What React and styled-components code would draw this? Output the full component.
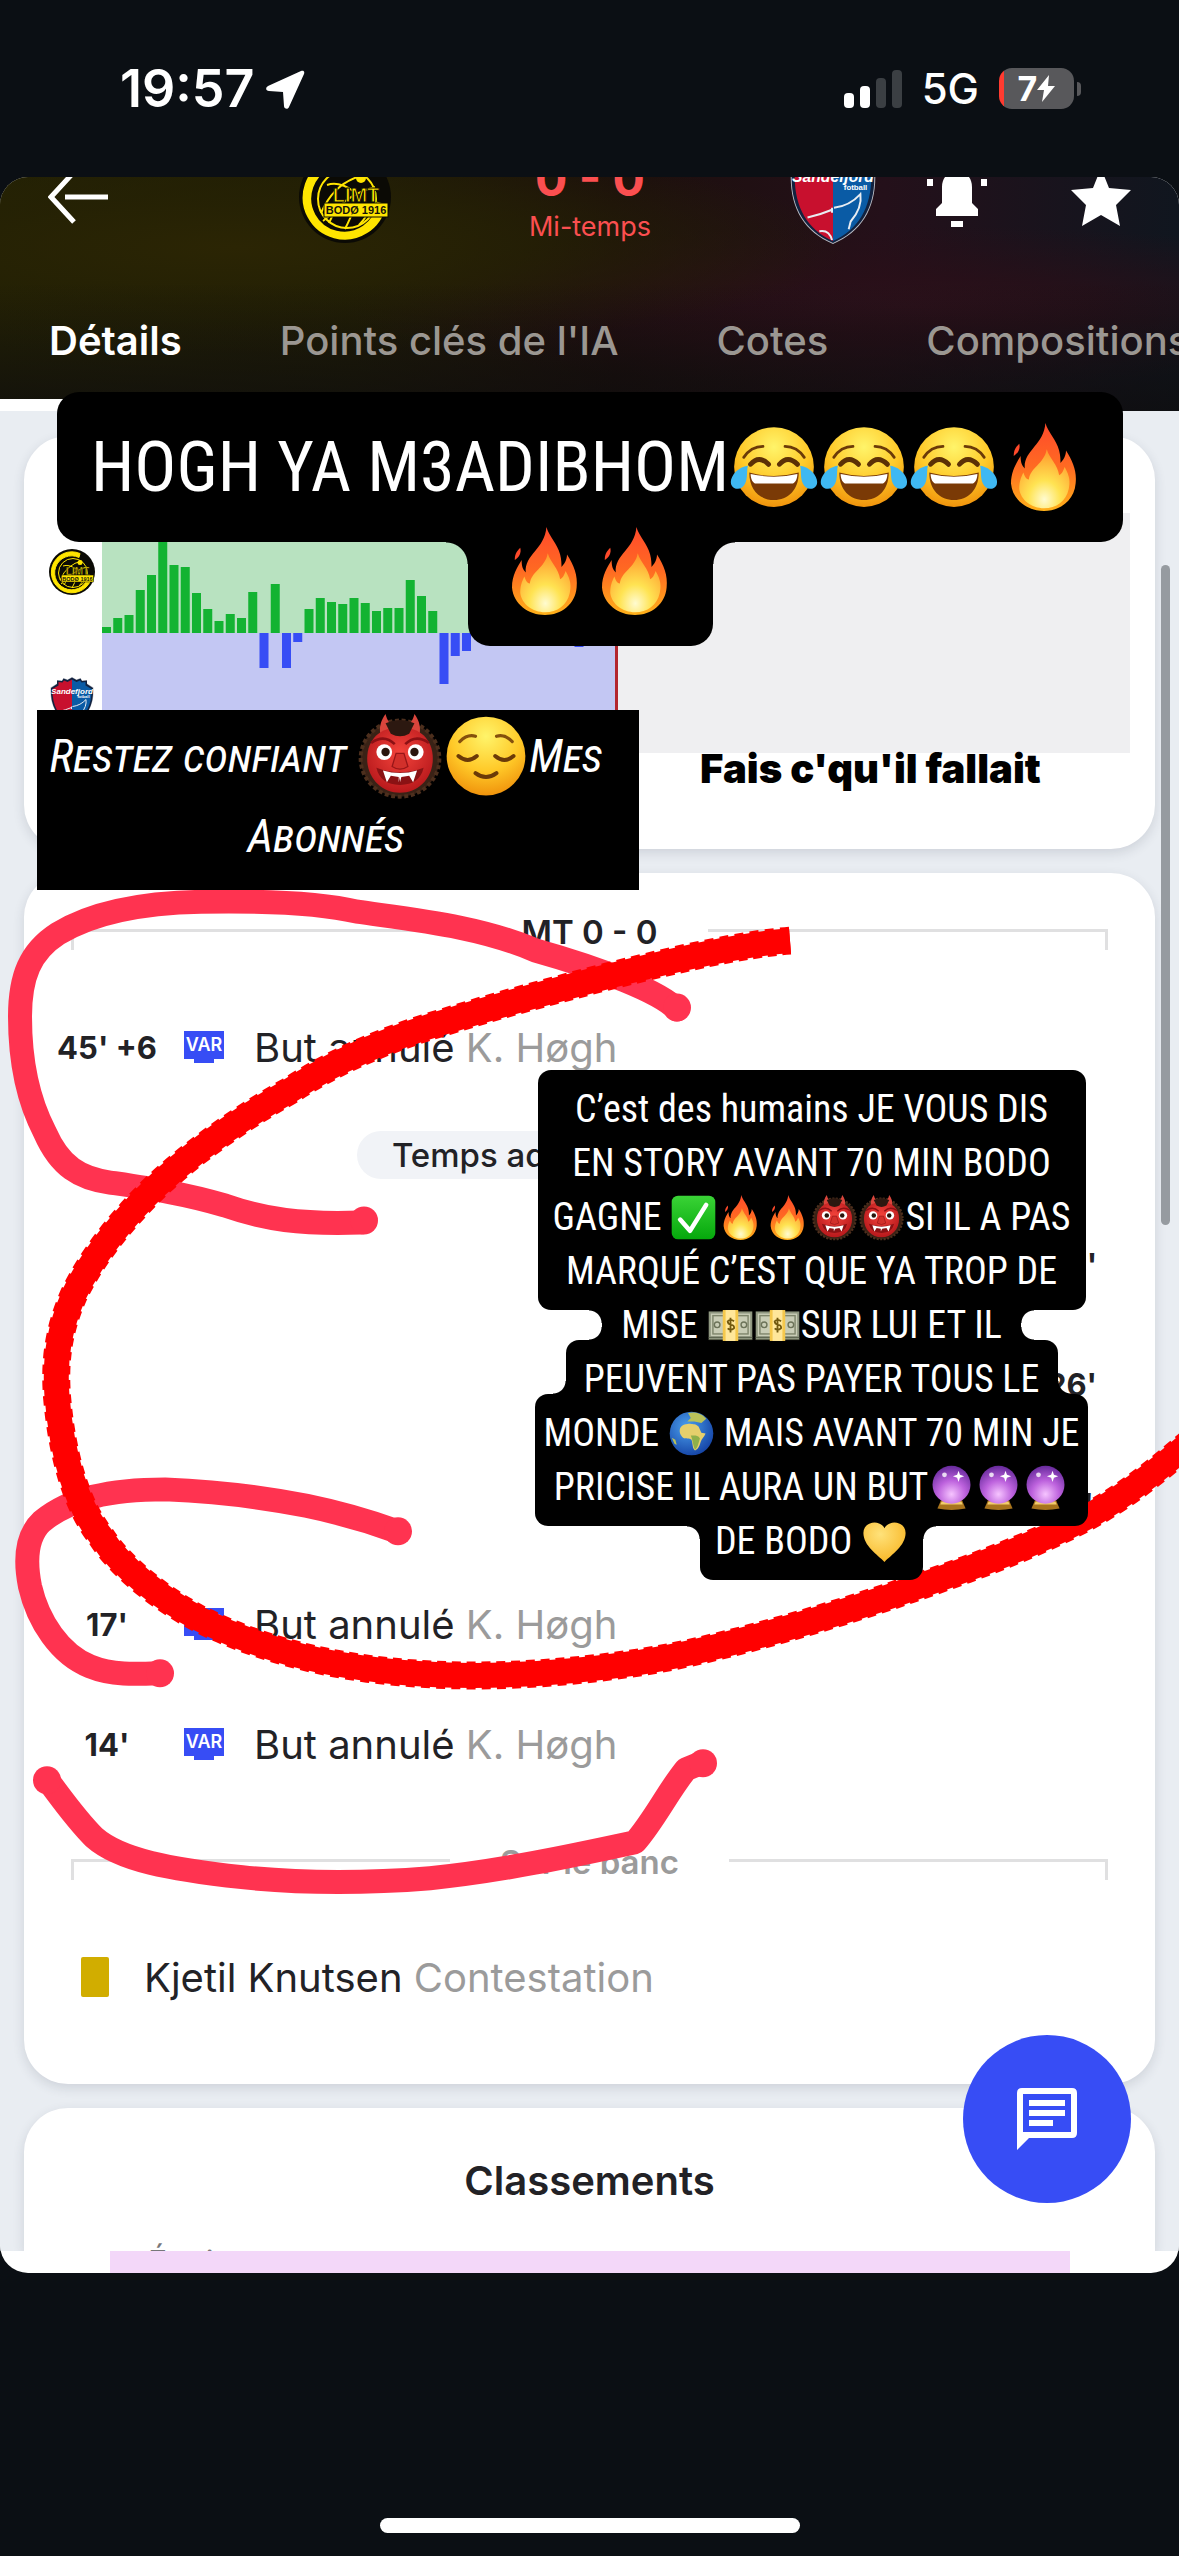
import React from 'react';
import styled, { createGlobalStyle, css } from 'styled-components';

const ui = "Inter, 'Liberation Sans', sans-serif";
const narrow = "'Liberation Sans Narrow', 'Roboto Condensed', 'Liberation Sans', sans-serif";

const GlobalStyle = createGlobalStyle`
  * { box-sizing: border-box; }
  body { margin: 0; background: #0b0f14; font-family: ${ui}; }
  button { border: 0; padding: 0; background: none; font: inherit; color: inherit; }
  svg { display: block; }
`;

/* ---------- shell ---------- */

const Screen = styled.div`
  min-height: 100vh;
  display: flex;
  flex-direction: column;
  background: #0b0f14;
  overflow: hidden;
`;

const StatusBar = styled.header`
  height: 177px;
  padding: 0 98px 0 120px;
  display: flex;
  align-items: center;
  justify-content: space-between;
  color: #fff;
`;

const StatusGroup = styled.div`
  display: flex;
  align-items: center;
  gap: ${(p) => p.$gap}px;
`;

const Clock = styled.time`
  font-size: 52px;
  font-weight: 600;
  line-height: 60px;
`;

const Network = styled.span`
  font-size: 42px;
  font-weight: 500;
  line-height: 60px;
`;

const Battery = styled.div`
  display: flex;
  align-items: center;
  gap: 3px;
  &::after {
    content: '';
    width: 4px;
    height: 14px;
    border-radius: 0 4px 4px 0;
    background: #58585b;
  }
`;

const BatteryBody = styled.div`
  width: 75px;
  height: 41px;
  border-radius: 13px;
  display: flex;
  align-items: center;
  justify-content: center;
  font-size: 34px;
  font-weight: 700;
  background: linear-gradient(to right, #ff3b30 5px, #58585b 5px);
`;

const Story = styled.main`
  position: relative;
  border-radius: 28px;
  overflow: hidden;
  background: #fff;
`;

const HomeArea = styled.footer`
  flex: 1;
  min-height: 60px;
  display: flex;
  align-items: flex-end;
  justify-content: center;
  padding-bottom: 23px;
`;

const HomeBar = styled.div`
  width: 420px;
  height: 15px;
  border-radius: 8px;
  background: #fff;
`;

/* ---------- match header ---------- */

const MatchHeader = styled.div`
  height: 234px;
  overflow: hidden;
  background:
    linear-gradient(to bottom, rgba(14, 13, 13, 0) 45%, rgba(14, 13, 14, 0.75) 100%),
    radial-gradient(ellipse at 20% 30%, #2b2504 0, rgba(38, 34, 4, 0.75) 22%, rgba(20, 17, 8, 0) 46%),
    radial-gradient(ellipse at 77% 55%, #2c111b 0, rgba(42, 15, 24, 0.7) 16%, rgba(20, 14, 20, 0) 44%),
    linear-gradient(to right, #232104 0, #1f1c06 30%, #1c0f0c 52%, #24101a 75%, #10161f 100%);
`;

const MatchRow = styled.div`
  height: 144px;
  margin-top: -52px;
  padding: 0 48px;
  display: flex;
  align-items: center;
  color: #fff;
`;

const Teams = styled.div`
  width: 578px;
  margin: 0 50px 0 auto;
  display: flex;
  align-items: center;
  justify-content: space-between;
`;

const Actions = styled.div`
  width: 204px;
  display: flex;
  align-items: center;
  justify-content: space-between;
`;

const ScoreBlock = styled.div`
  display: flex;
  flex-direction: column;
  align-items: center;
  color: #fb4f50;
`;

const Score = styled.strong`
  font-size: 48px;
  font-weight: 700;
  line-height: 60px;
`;

const Period = styled.span`
  font-size: 27px;
  line-height: 36px;
`;

const Tabs = styled.nav`
  height: 142px;
  display: flex;
`;

const Tab = styled.button`
  flex: none;
  padding: 0 49px;
  font-size: 40px;
  font-weight: ${(p) => (p.$active ? 600 : 500)};
  color: ${(p) => (p.$active ? '#fff' : '#9b9792')};
  box-shadow: ${(p) => (p.$active ? 'inset 0 -12px 0 #fff' : 'none')};
`;

/* ---------- cards ---------- */

const Feed = styled.div`
  display: flex;
  flex-direction: column;
  gap: 24px;
  padding: 25px 24px 0 24px;
  overflow: hidden;
  background: #e9edf2;
`;

const Card = styled.section`
  padding: ${(p) => p.$pad};
  border-radius: ${(p) => (p.$open ? '44px 44px 0 0' : '44px')};
  background: #fff;
  box-shadow: 0 4px 12px rgba(40, 50, 70, 0.14);
`;

const Momentum = styled.div`
  display: flex;
  height: 240px;
`;

const Crests = styled.div`
  width: 52px;
  margin-right: 4px;
  margin-left: 22px;
  padding: 36px 0 24px;
  display: flex;
  flex-direction: column;
  align-items: center;
  justify-content: space-between;
`;

const Chart = styled.svg`
  flex: 1;
  min-width: 0;
  height: 240px;
`;

const Divider = styled.div`
  display: flex;
  align-items: center;
  gap: 50px;
  height: 36px;
  margin: ${(p) => p.$top}px 47px 37px;
  font-size: 33px;
  font-weight: 600;
  line-height: 36px;
  white-space: nowrap;
  color: ${(p) => (p.$muted ? '#9b9b9b' : '#222226')};
  &::before,
  &::after {
    content: '';
    flex: 1;
    height: 18px;
    align-self: flex-end;
    border-top: 3px solid #e0e0e1;
  }
  &::before { border-left: 3px solid #e0e0e1; }
  &::after { border-right: 3px solid #e0e0e1; }
`;

const Event = styled.div`
  height: 120px;
  padding: 0 36px;
  display: flex;
  align-items: center;
  gap: 30px;
  flex-direction: ${(p) => (p.$away ? 'row-reverse' : 'row')};
  font-size: 40px;
  white-space: nowrap;
  color: #222226;
`;

const Minute = styled.time`
  flex: none;
  width: 94px;
  display: flex;
  justify-content: center;
  font-size: 31px;
  font-weight: 700;
`;

const Muted = styled.span`
  color: #9b9b9b;
`;

const YellowCard = styled.span`
  width: 28px;
  height: 40px;
  margin: 0 5px 0 21px;
  border-radius: 2px;
  background: #d1ad00;
`;

const Extra = styled.div`
  width: fit-content;
  height: 48px;
  margin: 24px auto 25px;
  padding: 0 35px;
  border-radius: 24px;
  background: #f1f3f7;
  font-size: 33px;
  font-weight: 500;
  line-height: 48px;
  color: #222226;
`;

const Title = styled.h2`
  margin: 0;
  font-size: 40px;
  font-weight: 600;
  line-height: 48px;
  text-align: center;
  color: #222226;
`;

const TableHead = styled.div`
  height: 46px;
  padding: 38px 124px 0;
  overflow: hidden;
  font-size: 32px;
  line-height: 40px;
  color: #77777a;
`;

const TableStrip = styled.div`
  height: 22px;
  margin: 0 109px 0 110px;
  background: #f3d7f9;
`;

const Fab = styled.button`
  position: absolute;
  right: 48px;
  bottom: 70px;
  width: 168px;
  height: 168px;
  border-radius: 50%;
  background: #374df5;
  display: grid;
  place-items: center;
`;

const ScrollThumb = styled.div`
  position: absolute;
  right: 9px;
  top: 388px;
  width: 9px;
  height: 660px;
  border-radius: 5px;
  background: #969ba0;
`;

/* ---------- story overlays ---------- */

const Ink = styled.svg`
  position: absolute;
  inset: 0;
  width: 100%;
  height: 100%;
  pointer-events: none;
`;

const Sticker = styled.div`
  position: absolute;
  left: ${(p) => p.$x}px;
  top: ${(p) => p.$y}px;
  width: ${(p) => p.$w}px;
  display: flex;
  flex-direction: column;
  align-items: center;
  font-family: ${narrow};
  font-size: ${(p) => p.$size}px;
  color: #fff;
  --line: ${(p) => p.$line}px;
  --pad: ${(p) => p.$pad}px;
  --r: ${(p) => p.$r}px;
`;

const hollow = (side) => css`
  content: '';
  position: absolute;
  ${side === 'left' ? 'right' : 'left'}: 100%;
  top: calc(var(--pad) * 2);
  bottom: calc(var(--pad) * 2);
  width: var(--r);
  background-repeat: no-repeat;
  background-size: var(--r) var(--r);
  background-position: 0 0, 0 100%;
  background-image:
    radial-gradient(circle at ${side === 'left' ? '0' : '100%'} 100%, transparent calc(var(--r) - 1px), ${(p) => (p.$under ? '#000' : 'transparent')} var(--r)),
    radial-gradient(circle at ${side === 'left' ? '0' : '100%'} 0, transparent calc(var(--r) - 1px), ${(p) => (p.$over ? '#000' : 'transparent')} var(--r));
`;

const Block = styled.div`
  position: relative;
  width: ${(p) => p.$w}px;
  padding: var(--pad) 0;
  border-radius: var(--r);
  background: #000;
  & + & { margin-top: calc(var(--pad) * -2); }
  &::before { ${hollow('left')} }
  &::after { ${hollow('right')} }
`;

const Line = styled.div`
  position: relative;
  z-index: 1;
  height: var(--line);
  display: flex;
  align-items: center;
  justify-content: center;
  white-space: pre;
  line-height: var(--line);
`;

const Plate = styled.div`
  position: absolute;
  left: 37px;
  top: 533px;
  width: 602px;
  height: 180px;
  padding: 6px 24px 0 0;
  background: #000;
  color: #fff;
  font-family: ${narrow};
  font-style: italic;
  font-variant: small-caps;
  font-size: 46px;
  --line: 80px;
`;

const Caption = styled.p`
  position: absolute;
  left: 700px;
  top: 568px;
  margin: 0;
  font-size: 40px;
  font-weight: 900;
  line-height: 48px;
  white-space: nowrap;
  color: #000;
`;

/* ---------- emoji ---------- */

const EmojiDefs = () => (
  <svg width="0" height="0" style={{ position: 'absolute' }} aria-hidden="true">
    <defs>
      <radialGradient id="face" cx=".5" cy=".25" r=".8">
        <stop offset="0" stopColor="#fff46a" />
        <stop offset=".55" stopColor="#ffc928" />
        <stop offset="1" stopColor="#ee8b08" />
      </radialGradient>
      <linearGradient id="flame" x1="0" y1="0" x2="0" y2="1">
        <stop offset="0" stopColor="#ff4a2b" />
        <stop offset=".5" stopColor="#ff6a22" />
        <stop offset="1" stopColor="#ffb11a" />
      </linearGradient>
      <radialGradient id="core" cx=".5" cy=".85" r=".8">
        <stop offset="0" stopColor="#fffbd0" />
        <stop offset=".4" stopColor="#ffe352" />
        <stop offset="1" stopColor="#ff9c2e" />
      </radialGradient>
      <radialGradient id="mask" cx=".5" cy=".4" r=".6">
        <stop offset="0" stopColor="#f4443c" />
        <stop offset="1" stopColor="#b8191c" />
      </radialGradient>
      <linearGradient id="green" x1="0" y1="0" x2="0" y2="1">
        <stop offset="0" stopColor="#3ad336" />
        <stop offset="1" stopColor="#05a80c" />
      </linearGradient>
      <radialGradient id="sea" cx=".4" cy=".35" r=".7">
        <stop offset="0" stopColor="#4ba0ee" />
        <stop offset="1" stopColor="#1442a4" />
      </radialGradient>
      <radialGradient id="orb" cx=".5" cy=".75" r=".8">
        <stop offset="0" stopColor="#f6c4ff" />
        <stop offset=".45" stopColor="#bd62dd" />
        <stop offset="1" stopColor="#5b2293" />
      </radialGradient>
      <radialGradient id="gold" cx=".4" cy=".3" r=".8">
        <stop offset="0" stopColor="#ffe27a" />
        <stop offset="1" stopColor="#f8b31f" />
      </radialGradient>
    </defs>
  </svg>
);

const art = {
  joy: (
    <>
      <circle cx="32" cy="32" r="29" fill="url(#face)" />
      <path d="M10 25c4-6 9-8 14-8M54 25c-4-6-9-8-14-8" fill="none" stroke="#6b3a08" strokeWidth="2" strokeLinecap="round" />
      <path d="M15 30q6-7 13 0M36 30q6-7 13 0" fill="none" stroke="#5c3006" strokeWidth="3.6" strokeLinecap="round" />
      <path d="M14 36q18 5 36 0c0 13-8 20-18 20s-18-7-18-20z" fill="#7a3a06" />
      <path d="M15 37q17 4 34 0c0 4-2 7-4 7H19c-2 0-4-3-4-7z" fill="#fff" />
      <path d="M13 31c-8 1-14 9-12 14 2 4 8 4 10-1 2-4 1-9 2-13zM51 31c8 1 14 9 12 14-2 4-8 4-10-1-2-4-1-9-2-13z" fill="#3fb8f2" />
    </>
  ),
  fire: (
    <>
      <path d="M33 0c2 7 8 12 10 20 1 4 1 7 1 9 2-2 4-5 4-9 5 8 8 15 7 24-1 12-11 20-23 20S9 56 8 44c0-9 4-15 7-20 0 5 1 7 3 9C17 20 32 16 33 0z" fill="url(#flame)" />
      <path d="M14 15c-3 3-4 5-4 9 3-2 5-5 4-9z" fill="#ff4a2b" />
      <path d="M34 19c2 7 8 11 9 19 2-1 3-3 4-6 4 7 4 11 3 16-2 9-9 14-18 14s-17-6-18-14c0-5 1-8 3-12 1 3 2 5 4 5 1-9 11-11 13-22z" fill="url(#core)" />
    </>
  ),
  ogre: (
    <>
      <ellipse cx="32" cy="34" rx="30" ry="29" fill="#3a2216" stroke="#4d2f1d" strokeWidth="3" strokeDasharray="3 2" />
      <path d="M17 15C16 9 18 4 21 0c1 5 4 8 7 11zM47 15c1-6-1-11-4-15-1 5-4 8-7 11z" fill="#d9453c" />
      <path d="M32 10c15 0 25 9 25 24S46 60 32 60 7 49 7 34s10-24 25-24z" fill="url(#mask)" />
      <path d="M21 7q11-5 22 0l-4 8q-7 4-14 0z" fill="#2c1810" />
      <path d="M10 22q10-7 18 1M54 22q-10-7-18 1" fill="none" stroke="#8c1014" strokeWidth="2" />
      <circle cx="20" cy="29" r="6" fill="#fff" />
      <circle cx="44" cy="29" r="6" fill="#fff" />
      <circle cx="21" cy="29" r="3.2" fill="#2a150c" />
      <circle cx="43" cy="29" r="3.2" fill="#2a150c" />
      <path d="M29 30l-3 10q6 4 12 0l-3-10z" fill="#d2302b" stroke="#981618" strokeWidth="1" />
      <path d="M14 41q18 7 36 0-3 13-18 13T14 41z" fill="#8a1214" />
      <path d="M19 43l3 9 3-5 6 1v4l1-4v4l1-4 6-1 3 5 3-9q-13 4-26 0z" fill="#fff" />
    </>
  ),
  relieved: (
    <>
      <circle cx="32" cy="32" r="30" fill="url(#face)" />
      <path d="M12 21q6-6 12-4M52 21q-6-6-12-4" fill="none" stroke="#85500c" strokeWidth="2.4" strokeLinecap="round" />
      <path d="M11 32q7 6 14 0M39 32q7 6 14 0M24 45q8 6 16 0" fill="none" stroke="#6b3a08" strokeWidth="3" strokeLinecap="round" />
    </>
  ),
  check: (
    <>
      <rect x="1" y="1" width="62" height="62" rx="9" fill="url(#green)" />
      <path d="M13 35l14 16 23-37" fill="none" stroke="#fff" strokeWidth="6.5" strokeLinecap="round" strokeLinejoin="round" />
    </>
  ),
  money: (
    <>
      <rect x="1" y="12" width="62" height="40" fill="#8f9780" />
      <rect x="4" y="15" width="56" height="32" fill="#c9cdb6" />
      <rect x="7" y="18" width="50" height="26" fill="none" stroke="#7f866c" strokeWidth="2" />
      <circle cx="13" cy="31" r="4" fill="none" stroke="#6c7359" strokeWidth="2" />
      <circle cx="51" cy="31" r="4" fill="none" stroke="#6c7359" strokeWidth="2" />
      <path d="M1 52h62M1 49h62" stroke="#5f6650" strokeWidth="1.4" />
      <rect x="21" y="10" width="22" height="44" fill="#f5c84c" />
      <rect x="25" y="10" width="14" height="44" fill="#ffe79a" />
      <path d="M37 26q-5-4-9 0 0 4 5 5t4 5q-5 4-9 0M32 21v21" fill="none" stroke="#72590f" strokeWidth="2.6" />
    </>
  ),
  globe: (
    <>
      <circle cx="32" cy="32" r="31" fill="url(#sea)" />
      <path d="M16 24c3-5 9-6 14-6 4 1 8 0 12 4l4 9 6 1c-2 5-6 8-7 12s-3 10-8 12c-4-2-3-10-5-15-3-3-8-1-12-3-4-4-6-9-4-14z" fill="#e6cf6c" />
      <path d="M27 3c9-2 19 0 26 8l-7 6-10-2-10 0 5-5zM4 38l5 3 2 7-3-1z" fill="#b9c25a" />
      <path d="M31 35c5 0 10-1 13 4-2 6-3 13-7 16-3-5-3-14-6-20z" fill="#8fb04a" />
    </>
  ),
  orb: (
    <>
      <path d="M17 50h30l5 12q-20 4-40 0z" fill="#a8741d" />
      <path d="M18 52h28l2 4H16z" fill="#f1cd6c" />
      <circle cx="32" cy="28" r="27" fill="url(#orb)" />
      <path d="M42 8l2 6 6 2-6 2-2 6-2-6-6-2 6-2z" fill="#fff" />
      <circle cx="22" cy="14" r="3.4" fill="#fff" opacity=".8" />
    </>
  ),
  heart: <path d="M32 61C22 51 2 38 2 20 2 4 24-1 32 13 40-1 62 4 62 20c0 18-20 31-30 41z" fill="url(#gold)" />,
};

const labels = {
  joy: 'rire aux larmes', fire: 'feu', ogre: 'ogre', relieved: 'soulagé', check: 'coche',
  money: 'billets', globe: 'globe', orb: 'boule de cristal', heart: 'cœur jaune',
};

const EmojiSvg = styled.svg`
  flex: none;
  margin: 0 1px;
  overflow: visible;
`;

const Emoji = ({ name, size }) => (
  <EmojiSvg role="img" aria-label={labels[name]} width={size} height={size} viewBox="0 0 64 64">
    {art[name]}
  </EmojiSvg>
);

const Rich = ({ parts, size }) => (
  <Line>
    {parts.map((part, i) =>
      art[part] ? <Emoji key={i} name={part} size={size} /> : <span key={i}>{part}</span>
    )}
  </Line>
);

/* ---------- crests and icons ---------- */

const BodoCrest = ({ size }) => (
  <svg width={size} height={size} viewBox="0 0 92 92" role="img" aria-label="Bodø/Glimt">
    <circle cx="46" cy="46" r="46" fill="#0b0a05" />
    <path d="M62 9A41 41 0 1 0 86 54L79 52A34 34 0 1 1 60 17z" fill="#ffe500" stroke="#ffe500" strokeWidth="2" />
    <circle cx="48" cy="48" r="29" fill="none" stroke="#ffe500" strokeWidth="2" />
    <path d="M22 62Q36 30 66 24M30 72Q40 46 76 36M46 78Q52 66 54 60M60 74Q68 66 70 58M28 34Q40 30 54 40M24 70Q30 66 34 60" fill="none" stroke="#ffe500" strokeWidth="2" />
    <circle cx="62" cy="27" r="5" fill="#ffe500" />
    <text x="57" y="51" textAnchor="middle" fontFamily="Liberation Sans" fontWeight="700" fontSize="20" fill="#ffe500" stroke="#0b0a05" strokeWidth="1">LIMT</text>
    <rect x="25" y="52" width="64" height="14" fill="#ffe500" stroke="#0b0a05" />
    <text x="57" y="63" textAnchor="middle" fontFamily="Liberation Sans" fontWeight="700" fontSize="11" fill="#16140a">BODØ 1916</text>
  </svg>
);

const SandefjordCrest = ({ width, height }) => (
  <svg width={width} height={height} viewBox="0 0 88 98" role="img" aria-label="Sandefjord Fotball">
    <path d="M1 22L14 14V7l10 1 3-5 8 3 9-5 9 5 8-3 3 5 10-1v7l13 8c2 36-12 62-43 75C13 84-1 58 1 22z" fill="#b9bcc4" />
    <path d="M2 23l12-8V8l10 1 3-5 8 3 9-5 9 5 8-3 3 5 10-1v7l12 8c2 35-12 60-42 73C14 83 0 58 2 23z" fill="#12223f" />
    <path d="M5 25l12-7v-7l8 1 3-4 7 3 9-5v88C17 82 4 58 5 25z" fill="#c8102e" />
    <path d="M83 25l-12-7v-7l-8 1-3-4-7 3-9-5v88c27-12 40-36 39-69z" fill="#0a5ba5" />
    <path d="M18 70q13-3 25-8M45 60q16-2 27-14 2 14-10 28l-2 8M30 84q10-2 13 9M43 60v5" fill="none" stroke="#e8ecf2" strokeWidth="2" />
    <text x="44" y="34" textAnchor="middle" fontFamily="Liberation Sans" fontStyle="italic" fontWeight="700" fontSize="16" fill="#fff">Sandefjord</text>
    <text x="67" y="42" textAnchor="middle" fontFamily="Liberation Sans" fontWeight="700" fontSize="8" fill="#fff">fotball</text>
  </svg>
);

const VarBadge = () => (
  <svg width="40" height="32" viewBox="0 0 40 32" role="img" aria-label="VAR">
    <path d="M0 0h40v28H30v4H10v-4H0z" fill="#374df5" />
    <text x="20" y="20" textAnchor="middle" fontFamily="Inter" fontWeight="600" fontSize="18" fill="#fff">VAR</text>
  </svg>
);

/* ---------- data ---------- */

const momentum = [
  6, 15, 18, 43, 58, 100, 68, 66, 40, 24, 12, 19, 15, 41, -35, 49, -35, -9, 24, 35, 31, 29, 35, 30, 22, 25, 25,
  53, 37, 22, -51, -23, -18, 0, 0, 0, 0, 0, 0, 0, 0, 0, -14,
];

const events = [
  { minute: "38'", away: true },
  { minute: "26'", away: true },
  { minute: "21'", away: true },
  { minute: "17'" },
  { minute: "14'" },
];

const Disallowed = ({ minute }) => (
  <Event>
    <Minute>{minute}</Minute>
    <VarBadge />
    <span>But annulé <Muted>K. Høgh</Muted></span>
  </Event>
);

const pinkStrokes = [
  'M677 833C660 815 600 792 536 774C480 750 420 744 357 735C320 726 260 724 201 725C150 726 95 734 58 757C30 775 20 800 20 840C20 880 26 920 45 956C60 990 80 1002 110 1006C150 1012 185 1017 225 1029C265 1043 300 1048 361 1046',
  'M397 1355C350 1338 280 1318 165 1313C110 1313 70 1322 42 1345C26 1360 25 1385 30 1410C38 1445 60 1478 90 1490C112 1499 135 1498 158 1497',
  'M47 1603C60 1620 75 1642 94 1661C120 1684 170 1693 242 1701C310 1708 380 1706 430 1702C500 1695 570 1680 635 1666C655 1643 668 1615 686 1593L703 1586',
];

const pinkTips = [[677, 831], [364, 1044], [398, 1355], [160, 1497], [47, 1604], [703, 1587]];

const redStroke =
  'M790 764C740 768 680 782 607 800C550 815 500 828 446 845C380 864 330 888 290 914C235 945 190 978 156 1010C115 1050 90 1085 74 1118C60 1150 54 1180 57 1220C62 1280 77 1330 101 1360C120 1390 160 1422 200 1443C260 1473 330 1490 400 1496C480 1503 560 1498 640 1486C700 1477 800 1450 890 1420C960 1396 1040 1368 1097 1335C1130 1316 1160 1292 1190 1266';

/* ---------- page ---------- */

export default function App() {
  return (
    <Screen>
      <GlobalStyle />
      <EmojiDefs />
      <StatusBar>
        <StatusGroup $gap={10}>
          <Clock>19:57</Clock>
          <svg width="40" height="40" viewBox="0 0 40 40" aria-hidden="true">
            <path d="M36 2L3 17c-3 2-2 5 1 5l14 1 1 14c0 3 4 4 5 1L39 5c1-3-1-4-3-3z" fill="#fff" />
          </svg>
        </StatusGroup>
        <StatusGroup $gap={20}>
          <svg width="58" height="38" viewBox="0 0 58 38" aria-hidden="true">
            <rect x="0" y="23" width="10" height="15" rx="4" fill="#fff" />
            <rect x="16" y="16" width="10" height="22" rx="4" fill="#fff" />
            <rect x="32" y="8" width="10" height="30" rx="4" fill="#3b3f43" />
            <rect x="48" y="0" width="10" height="38" rx="4" fill="#3b3f43" />
          </svg>
          <Network>5G</Network>
          <Battery>
            <BatteryBody>
              7
              <svg width="18" height="27" viewBox="0 0 18 27" aria-hidden="true">
                <path d="M12 0L0 15h7L5 27 18 11h-7z" fill="#fff" />
              </svg>
            </BatteryBody>
          </Battery>
        </StatusGroup>
      </StatusBar>

      <Story>
        <MatchHeader>
          <MatchRow>
            <button aria-label="Retour">
              <svg width="60" height="54" viewBox="0 0 60 54" fill="none" stroke="#fff" strokeWidth="5">
                <path d="M26 2L3 27l23 25M17 27h43" />
              </svg>
            </button>
            <Teams>
              <BodoCrest size={92} />
              <ScoreBlock>
                <Score>0 - 0</Score>
                <Period>Mi-temps</Period>
              </ScoreBlock>
              <SandefjordCrest width={88} height={96} />
            </Teams>
            <Actions>
              <button aria-label="Notifications">
                <svg width="60" height="60" viewBox="0 0 60 60" fill="#fff">
                  <path d="M15 36V20C15 10 22 4 30 4s15 6 15 16v16l6 6v7H9v-7zM24 54h12v6H24zM0 12h6v7H0zM54 12h6v7h-6z" />
                </svg>
              </button>
              <button aria-label="Favori">
                <svg width="60" height="58" viewBox="0 0 60 58" fill="#fff">
                  <path d="M30 0l8 20 22 2-15 15 4 21-19-11-19 11 4-21L0 22l22-2z" />
                </svg>
              </button>
            </Actions>
          </MatchRow>
          <Tabs>
            <Tab $active>Détails</Tab>
            <Tab>Points clés de l'IA</Tab>
            <Tab>Cotes</Tab>
            <Tab>Compositions</Tab>
          </Tabs>
        </MatchHeader>

        <Feed>
          <Card $pad="77px 25px 96px 0">
            <Momentum>
              <Crests>
                <BodoCrest size={46} />
                <SandefjordCrest width={44} height={56} />
              </Crests>
              <Chart viewBox="0 0 1028 240" preserveAspectRatio="none">
                <rect width="1028" height="240" fill="#efeff1" />
                <rect width="514" height="120" fill="#b8e2c0" />
                <rect y="120" width="514" height="120" fill="#c3c7f3" />
                {momentum.map((v, i) => (
                  <rect
                    key={i}
                    x={i * 11.25}
                    y={v > 0 ? 120 - v : 120}
                    width="9"
                    height={Math.abs(v)}
                    fill={v > 0 ? '#13b332' : '#374df5'}
                  />
                ))}
                <rect x="513" width="3" height="240" fill="#b3262e" />
              </Chart>
            </Momentum>
          </Card>

          <Card $pad="1px 0 47px">
            <Divider $top={40}>MT 0 - 0</Divider>
            <Disallowed minute="45' +6" />
            <Extra>Temps additionnel 6 min.</Extra>
            {events.map((e) =>
              e.away ? (
                <Event key={e.minute} $away>
                  <Minute>{e.minute}</Minute>
                </Event>
              ) : (
                <Disallowed key={e.minute} minute={e.minute} />
              )
            )}
            <Divider $top={40} $muted>Sur le banc</Divider>
            <Event>
              <YellowCard />
              <span>Kjetil Knutsen <Muted>Contestation</Muted></span>
            </Event>
          </Card>

          <Card $pad="49px 0 0" $open>
            <Title>Classements</Title>
            <TableHead>Équipe</TableHead>
          </Card>
        </Feed>
        <TableStrip />

        <ScrollThumb />
        <Fab aria-label="Commentaires">
          <svg width="60" height="62" viewBox="0 0 60 62" fill="#fff">
            <path fillRule="evenodd" d="M5 0h50q5 0 5 5v40q0 5-5 5H12L0 62V5q0-5 5-5zm1 6v38h48V6z" />
            <path d="M12 12h36v6H12zM12 22h36v6H12zM12 32h24v6H12z" />
          </svg>
        </Fab>

        <Ink viewBox="0 0 1179 2097" preserveAspectRatio="none" aria-hidden="true" fill="none">
          <g stroke="#ff3350" strokeWidth="24" strokeLinecap="round" strokeLinejoin="round">
            {pinkStrokes.map((d) => <path key={d} d={d} />)}
          </g>
          {pinkTips.map(([x, y]) => <circle key={x} cx={x} cy={y} r="14" fill="#ff3350" />)}
          <path d={redStroke} stroke="#f00" strokeWidth="25" />
          <path d={redStroke} stroke="#f00" strokeWidth="28" strokeDasharray="9 6" />
        </Ink>

        <Sticker $x={57} $y={215} $w={1066} $size={70} $line={104} $pad={23} $r={22}>
          <Block $w={1066}>
            <Rich size={88} parts={['HOGH YA M3ADIBHOM', 'joy', 'joy', 'joy', 'fire']} />
          </Block>
          <Block $w={245} $under>
            <Rich size={88} parts={['fire', 'fire']} />
          </Block>
        </Sticker>

        <Plate>
          <Rich size={84} parts={['Restez confiant ', 'ogre', 'relieved', 'Mes']} />
          <Rich size={84} parts={['Abonnés']} />
        </Plate>

        <Caption>Fais c'qu'il fallait</Caption>

        <Sticker $x={535} $y={893} $w={553} $size={38} $line={54} $pad={12} $r={13}>
          <Block $w={548}>
            <Rich size={45} parts={['C’est des humains JE VOUS DIS']} />
            <Rich size={45} parts={['EN STORY AVANT 70 MIN BODO']} />
            <Rich size={45} parts={['GAGNE ', 'check', 'fire', 'fire', 'ogre', 'ogre', 'SI IL A PAS']} />
            <Rich size={45} parts={['MARQUÉ C’EST QUE YA TROP DE']} />
          </Block>
          <Block $w={419} $under $over>
            <Rich size={45} parts={['MISE ', 'money', 'money', 'SUR LUI ET IL']} />
          </Block>
          <Block $w={492} $over>
            <Rich size={45} parts={['PEUVENT PAS PAYER TOUS LE']} />
          </Block>
          <Block $w={553}>
            <Rich size={45} parts={['MONDE ', 'globe', ' MAIS AVANT 70 MIN JE']} />
            <Rich size={45} parts={['PRICISE IL AURA UN BUT', 'orb', 'orb', 'orb']} />
          </Block>
          <Block $w={223} $under>
            <Rich size={45} parts={['DE BODO ', 'heart']} />
          </Block>
        </Sticker>
      </Story>

      <HomeArea>
        <HomeBar />
      </HomeArea>
    </Screen>
  );
}
